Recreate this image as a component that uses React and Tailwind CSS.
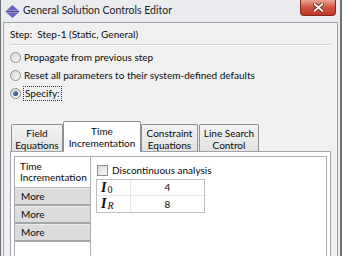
export default function App() {
  const font = "font-['Lato','Liberation_Sans',sans-serif]";

  function Radio({ checked }) {
    return (
      <span className="flex w-[11px] h-[11px] items-center justify-center rounded-full border border-[#8a8c8f] bg-gradient-to-br from-[#d4d6d8] to-[#fbfbfb]">
        {checked && (
          <span className="w-[5px] h-[5px] rounded-full bg-gradient-to-br from-[#6d9bd1] to-[#1b3c66]" />
        )}
      </span>
    );
  }

  function Tab({ lines, active, w }) {
    return active ? (
      <div className={`relative z-10 -mb-[1px] h-[31px] ${w} flex flex-col items-center pt-[3px] bg-white border border-b-0 border-[#8d9096] rounded-t-[2px] leading-[12px] whitespace-nowrap`}>
        {lines.map((l) => (
          <span key={l}>{l}</span>
        ))}
      </div>
    ) : (
      <div className={`h-[27px] ${w} flex flex-col items-center pt-[2px] bg-gradient-to-b from-[#f3f3f3] to-[#e2e2e2] border border-b-0 border-[#8d9096] rounded-t-[2px] leading-[12px] whitespace-nowrap`}>
        {lines.map((l) => (
          <span key={l}>{l}</span>
        ))}
      </div>
    );
  }

  return (
    <div className={`relative w-[342px] h-[256px] overflow-hidden bg-[#eaecef] border-l border-r-2 border-[#6f7378] ${font} text-[10px] text-[#0a0a0a]`}>
      {/* title bar */}
      <div className="h-[22px] flex items-center pl-[5px]">
        <svg width="13" height="13" viewBox="0 0 13 13">
          <polygon points="6.5,0 12,5 1,5" fill="#6d63bd" />
          <rect x="0" y="5.5" width="13" height="2" fill="#4c439c" />
          <polygon points="1,8 12,8 6.5,13" fill="#6d63bd" />
        </svg>
        <span className="ml-[4px] text-[10.5px] text-[#1e1e1e]">General Solution Controls Editor</span>
      </div>

      {/* close button */}
      <div className="absolute left-[299px] top-0 w-[36px] h-[16px] rounded-b-[4px] border border-t-0 border-[#7d2a1f] bg-gradient-to-b from-[#e8a493] via-[#d0533f] to-[#c13a26] flex items-center justify-center">
        <svg width="11" height="9" viewBox="0 0 11 9">
          <path d="M1.5 1 L9.5 8 M9.5 1 L1.5 8" stroke="#5a2018" strokeWidth="3.4" strokeLinecap="round" />
          <path d="M1.5 1 L9.5 8 M9.5 1 L1.5 8" stroke="#ffffff" strokeWidth="1.8" strokeLinecap="round" />
        </svg>
      </div>

      {/* client frame */}
      <div className="mx-[2px] h-[240px] border border-[#a3a7ac] bg-[#f0f0f0]">
        <div className="pl-[6px] pt-[5px] leading-[12px]">
          Step:&nbsp;&nbsp;Step-1 (Static, General)
        </div>
        <div className="mx-[6px] mt-[4px] border-t border-b border-t-[#d3d3d3] border-b-[#fbfbfb]" />

        <div className="mt-[2px] pl-[6px] flex flex-col">
          <div className="h-[18px] flex items-center gap-[3px]">
            <Radio />
            <span>Propagate from previous step</span>
          </div>
          <div className="h-[18px] flex items-center gap-[3px]">
            <Radio />
            <span>Reset all parameters to their system-defined defaults</span>
          </div>
          <div className="h-[18px] flex items-center gap-[2px]">
            <Radio checked />
            <span className="border border-dotted border-[#333] px-[1px] leading-[13px]">Specify:</span>
          </div>
        </div>

        {/* tab widget */}
        <div className="mx-[6px] mt-[19px]">
          <div className="flex items-end h-[30px] pl-[1px]">
            <Tab lines={["Field", "Equations"]} w="w-[52px]" />
            <Tab lines={["Time", "Incrementation"]} w="w-[78px]" active />
            <Tab lines={["Constraint", "Equations"]} w="w-[57px]" />
            <Tab lines={["Line Search", "Control"]} w="w-[60px] ml-[1px]" />
          </div>
          <div className="h-[110px] border border-[#9fa3a8] bg-white pl-[3px] pr-[3px] pt-[4px]">
            <div className="h-full flex border border-b-0 border-[#a9adb2]">
              {/* left list */}
              <div className="w-[76px] flex flex-col border-r border-[#a9adb2]">
                <div className="h-[31px] flex flex-col pl-[5px] pt-[4px] leading-[11px] bg-white border-b border-[#b5b5b5]">
                  <span>Time</span>
                  <span>Incrementation</span>
                </div>
                {["More", "More", "More"].map((m, i) => (
                  <div
                    key={i}
                    className="h-[18px] flex items-center pl-[6px] bg-[#dcdcdc] border-t border-[#ececec] border-b-2 border-b-[#a4a6a9]"
                  >
                    {m}
                  </div>
                ))}
              </div>

              {/* page */}
              <div className="flex-1 pl-[5px] pt-[7px]">
                <div className="flex items-center gap-[4px] ml-[1px] h-[12px]">
                  <span className="w-[11px] h-[11px] border border-[#8e8f91] bg-gradient-to-br from-[#d9dadb] to-[#f7f7f7]" />
                  <span>Discontinuous analysis</span>
                </div>
                <div className="mt-[3px] w-[109px] border border-[#bdbdbd]">
                  <div className="flex h-[16px] border-b border-[#e6e6e6]">
                    <div className="w-[34px] border-r border-[#e6e6e6] pl-[4px] flex items-center font-['Liberation_Serif',serif] font-bold italic text-[14px] leading-none">
                      I<sub className="text-[10px] not-italic font-normal ml-[1px] relative top-[2px]">0</sub>
                    </div>
                    <div className="flex-1 flex items-center justify-center">4</div>
                  </div>
                  <div className="flex h-[16px]">
                    <div className="w-[34px] border-r border-[#e6e6e6] pl-[4px] flex items-center font-['Liberation_Serif',serif] font-bold italic text-[14px] leading-none">
                      I<sub className="text-[10px] italic font-normal ml-[1px] relative top-[2px]">R</sub>
                    </div>
                    <div className="flex-1 flex items-center justify-center">8</div>
                  </div>
                </div>
              </div>
            </div>
          </div>
        </div>
      </div>
    </div>
  );
}
